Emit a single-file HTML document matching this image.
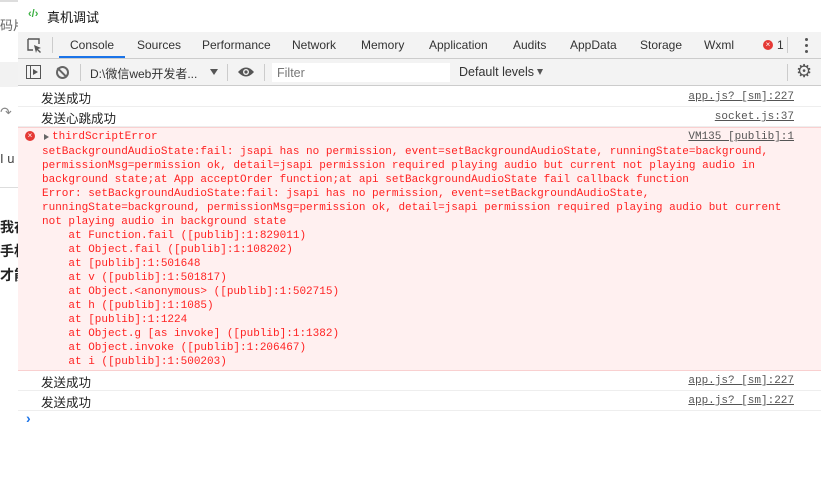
<!DOCTYPE html>
<html><head><meta charset="utf-8"><style>
*{margin:0;padding:0;box-sizing:border-box}
body{width:821px;height:493px;overflow:hidden;background:#fff;font-family:"Liberation Sans","Noto Sans CJK SC",sans-serif;position:relative;font-size:12px;color:#333}
.abs{position:absolute}
.mono{font-family:"Liberation Mono",monospace;font-size:11px}
.tab{position:absolute;top:38px;font-size:12px;color:#333}
.row{position:absolute;left:18px;right:0;height:20px;border-bottom:1px solid #eee;background:#fff}
.row .t{position:absolute;left:23px;top:1px;font-size:12.5px;color:#222}
.row .s{position:absolute;right:27px;top:4px;color:#555;text-decoration:underline}
.err{position:absolute;left:18px;right:0;top:127px;height:244px;background:#fff0f0;border-top:1px solid #f9d0d0;border-bottom:1px solid #f9d0d0;color:#f22}
.err pre{position:absolute;left:24px;top:17px;line-height:14px;font-family:"Liberation Mono",monospace;font-size:11px;color:#f22;white-space:pre}
</style></head><body>
<div class="abs" style="left:0;top:0;width:18px;height:2px;background:#ddd"></div>
<div class="abs" style="left:0;top:15px;font-size:13px;color:#666;width:18px;overflow:hidden;white-space:nowrap">码片</div>
<div class="abs" style="left:0;top:62px;width:18px;height:25px;background:#f2f2f2"></div>
<div class="abs" style="left:0;top:104px;font-size:14px;color:#888">↷</div>
<div class="abs" style="left:0;top:151px;font-size:13px;color:#444;width:18px;overflow:hidden;white-space:nowrap">I u</div>
<div class="abs" style="left:0;top:187px;width:18px;height:1px;background:#ddd"></div>
<div class="abs" style="left:0;top:215px;font-size:14px;font-weight:bold;color:#222;width:18px;overflow:hidden;white-space:nowrap;line-height:24px">我在<br>手机<br>才能</div>
<div class="abs" style="left:28px;top:8px;color:#3cb043;font-size:11px;font-weight:bold">‹/›</div>
<div class="abs" style="left:47px;top:7px;font-size:13px;color:#111">真机调试</div>
<div class="abs" style="left:18px;top:32px;right:0;height:27px;background:#f3f3f3;border-bottom:1px solid #ccc"></div>
<svg class="abs" style="left:27px;top:38px" width="16" height="16" viewBox="0 0 16 16"><path d="M1 1h11v5M1 1v11h5" fill="none" stroke="#555" stroke-width="1.4"/><path d="M7 7l7 3-3 1 3 3-1 1-3-3-1 3z" fill="#555"/></svg>
<div class="abs" style="left:52px;top:37px;width:1px;height:16px;background:#ccc"></div>
<div class="tab" style="left:70px">Console</div>
<div class="abs" style="left:59px;top:56px;width:66px;height:2px;background:#1a73e8"></div>
<div class="tab" style="left:137px">Sources</div>
<div class="tab" style="left:202px">Performance</div>
<div class="tab" style="left:292px">Network</div>
<div class="tab" style="left:361px">Memory</div>
<div class="tab" style="left:429px">Application</div>
<div class="tab" style="left:513px">Audits</div>
<div class="tab" style="left:570px">AppData</div>
<div class="tab" style="left:640px">Storage</div>
<div class="tab" style="left:704px">Wxml</div>
<div class="abs" style="left:763px;top:40px;width:10px;height:10px;border-radius:50%;background:#e53935;color:#fff;font-size:8px;line-height:10px;text-align:center">×</div>
<div class="tab" style="left:777px">1</div>
<div class="abs" style="left:787px;top:37px;width:1px;height:16px;background:#ccc"></div>
<div class="abs" style="left:805px;top:38px;width:3px;height:3px;background:#555;border-radius:50%;box-shadow:0 6px 0 #555,0 12px 0 #555"></div>
<div class="abs" style="left:18px;top:59px;right:0;height:27px;background:#f3f3f3;border-bottom:1px solid #ccc"></div>
<div class="abs" style="left:26px;top:65px;width:15px;height:14px;border:1.5px solid #555"></div>
<div class="abs" style="left:30px;top:66px;width:1px;height:12px;background:#555"></div>
<div class="abs" style="left:33px;top:69px;border-left:5px solid #555;border-top:3px solid transparent;border-bottom:3px solid transparent"></div>
<div class="abs" style="left:56px;top:66px;width:13px;height:13px;border:2px solid #666;border-radius:50%"></div>
<div class="abs" style="left:61px;top:66px;width:2px;height:13px;background:#666;transform:rotate(-45deg)"></div>
<div class="abs" style="left:80px;top:64px;width:1px;height:17px;background:#ccc"></div>
<div class="abs" style="left:90px;top:65px;font-size:12px;color:#333">D:\微信web开发者...</div>
<div class="abs" style="left:210px;top:69px;border-top:6px solid #555;border-left:4px solid transparent;border-right:4px solid transparent"></div>
<div class="abs" style="left:227px;top:64px;width:1px;height:17px;background:#ccc"></div>
<svg class="abs" style="left:237px;top:66px" width="18" height="12" viewBox="0 0 18 12"><path d="M1 6Q9-3 17 6Q9 15 1 6z" fill="#555"/><circle cx="9" cy="6" r="3" fill="#f3f3f3"/><circle cx="9" cy="6" r="1.6" fill="#555"/></svg>
<div class="abs" style="left:264px;top:64px;width:1px;height:17px;background:#ccc"></div>
<div class="abs" style="left:272px;top:63px;width:178px;height:19px;background:#fff"></div>
<div class="abs" style="left:277px;top:66px;color:#777;font-size:12.5px">Filter</div>
<div class="abs" style="left:459px;top:65px;color:#333;font-size:12.5px">Default levels</div>
<div class="abs" style="left:537px;top:69px;border-top:6px solid #555;border-left:3.5px solid transparent;border-right:3.5px solid transparent"></div>
<div class="abs" style="left:787px;top:64px;width:1px;height:17px;background:#ccc"></div>
<div class="abs" style="left:796px;top:61px;font-size:18px;color:#555">⚙</div>
<div class="row" style="top:87px"><span class="t">发送成功</span><span class="s mono">app.js? [sm]:227</span></div>
<div class="row" style="top:107px"><span class="t">发送心跳成功</span><span class="s mono">socket.js:37</span></div>
<div class="err">
<div class="abs" style="left:7px;top:3px;width:10px;height:10px;border-radius:50%;background:#e53935;color:#fff;font-size:8px;line-height:10px;text-align:center">×</div>
<div class="abs" style="left:26px;top:6px;border-left:5px solid #666;border-top:3px solid transparent;border-bottom:3px solid transparent"></div>
<div class="abs mono" style="left:34px;top:3px;color:#f22">thirdScriptError</div>
<div class="abs mono" style="right:27px;top:3px;color:#555;text-decoration:underline">VM135 [publib]:1</div>
<pre>setBackgroundAudioState:fail: jsapi has no permission, event=setBackgroundAudioState, runningState=background,
permissionMsg=permission ok, detail=jsapi permission required playing audio but current not playing audio in
background state;at App acceptOrder function;at api setBackgroundAudioState fail callback function
Error: setBackgroundAudioState:fail: jsapi has no permission, event=setBackgroundAudioState,
runningState=background, permissionMsg=permission ok, detail=jsapi permission required playing audio but current
not playing audio in background state
    at Function.fail ([publib]:1:829011)
    at Object.fail ([publib]:1:108202)
    at [publib]:1:501648
    at v ([publib]:1:501817)
    at Object.&lt;anonymous&gt; ([publib]:1:502715)
    at h ([publib]:1:1085)
    at [publib]:1:1224
    at Object.g [as invoke] ([publib]:1:1382)
    at Object.invoke ([publib]:1:206467)
    at i ([publib]:1:500203)</pre>
</div>
<div class="row" style="top:371px"><span class="t">发送成功</span><span class="s mono">app.js? [sm]:227</span></div>
<div class="row" style="top:391px"><span class="t">发送成功</span><span class="s mono">app.js? [sm]:227</span></div>
<div class="abs" style="left:26px;top:410px;color:#1a73e8;font-size:14px;font-weight:bold">›</div>
</body></html>
